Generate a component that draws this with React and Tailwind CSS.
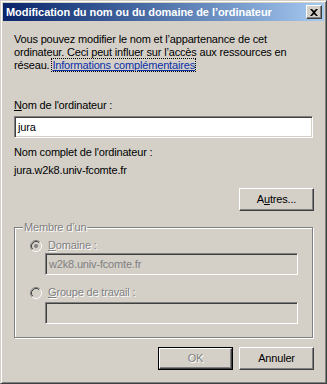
import React from 'react';

const raised =
  "border border-t-white border-l-white border-r-[#404040] border-b-[#404040] shadow-[inset_-1px_-1px_0_#808080] bg-[#d4d0c8]";
const sunken =
  "border border-t-[#808080] border-l-[#808080] border-r-white border-b-white shadow-[inset_1px_1px_0_#404040,inset_-1px_-1px_0_#d4d0c8]";
const disabledText = "text-[#808080] [text-shadow:1px_1px_0_#fff]";

function Radio({ checked }) {
  return (
    <svg width="12" height="12" viewBox="0 0 12 12" className="shrink-0">
      <circle cx="6" cy="6" r="5" fill="#d4d0c8" />
      <path d="M2.11 9.89 A5.5 5.5 0 0 1 9.89 2.11" fill="none" stroke="#808080" />
      <path d="M9.89 2.11 A5.5 5.5 0 0 1 2.11 9.89" fill="none" stroke="#fff" />
      <path d="M2.82 9.18 A4.5 4.5 0 0 1 9.18 2.82" fill="none" stroke="#404040" />
      <path d="M9.18 2.82 A4.5 4.5 0 0 1 2.82 9.18" fill="none" stroke="#d4d0c8" />
      {checked && <circle cx="6" cy="6" r="2" fill="#808080" />}
    </svg>
  );
}

function Button({ children, className = "" }) {
  return (
    <div className={`w-[75px] h-[23px] flex items-center justify-center ${raised} ${className}`}>
      {children}
    </div>
  );
}

export default function App() {
  return (
    <div className="w-[327px] h-[384px] bg-[#d4d0c8] border border-t-[#d4d0c8] border-l-[#d4d0c8] border-r-[#404040] border-b-[#404040] shadow-[inset_1px_1px_0_#fff,inset_-1px_-1px_0_#808080] p-[2px] flex flex-col font-['Liberation_Sans',Arial,sans-serif] text-[11px] leading-[13px] text-black">
      {/* title bar */}
      <div className="h-[18px] flex items-center justify-between bg-linear-to-r from-[#0a246a] to-[#a6caf0] pl-[3px] pr-[2px]">
        <span className="text-white font-bold whitespace-nowrap tracking-[-0.05px]">
          Modification du nom ou du domaine de l’ordinateur
        </span>
        <div className={`w-[16px] h-[14px] flex items-center justify-center ${raised}`}>
          <svg width="8" height="7" viewBox="0 0 8 7">
            <path d="M0 0h2l2 2 2-2h2L5 3.5 8 7H6L4 5 2 7H0l3-3.5z" fill="#000" />
          </svg>
        </div>
      </div>

      <div className="flex flex-col px-[11px] tracking-[-0.17px]">
        <p className="mt-[12px] whitespace-nowrap">
          Vous pouvez modifier le nom et l’appartenance de cet
          <br />
          ordinateur. Ceci peut influer sur l’accès aux ressources en
          <br />
          réseau.{' '}
          <span className="text-[#0a2fa8] underline outline-1 outline-dotted outline-black">
            Informations complémentaires
          </span>
        </p>

        <div className="mt-[27px]">
          <span className="underline">N</span>om de l'ordinateur :
        </div>
        <div className={`mt-[4px] h-[22px] bg-white flex items-center pl-[3px] ${sunken}`}>
          jura
        </div>

        <div className="mt-[8px]">Nom complet de l'ordinateur :</div>
        <div className="mt-[5px]">jura.w2k8.univ-fcomte.fr</div>

        <Button className="mt-[11px] self-end -mr-[1px]">
          A<span className="underline">u</span>tres...
        </Button>

        <fieldset className="mt-[10px] h-[117px] border border-[#808080] shadow-[inset_1px_1px_0_#fff,1px_1px_0_#fff] flex flex-col">
          <legend className={`ml-[8px] px-[1px] bg-[#d4d0c8] ${disabledText}`}>Membre d’un</legend>
          <div className="mt-[5px] ml-[15px] flex items-center gap-[6px]">
            <Radio checked />
            <span className={disabledText}>
              <span className="underline">D</span>omaine :
            </span>
          </div>
          <div className={`mt-[1px] ml-[30px] mr-[14px] h-[22px] flex items-center pl-[3px] bg-[#d4d0c8] ${sunken} text-[#808080]`}>
            w2k8.univ-fcomte.fr
          </div>
          <div className="mt-[11px] ml-[15px] flex items-center gap-[6px]">
            <Radio />
            <span className={disabledText}>
              <span className="underline">G</span>roupe de travail :
            </span>
          </div>
          <div className={`mt-[3px] ml-[30px] mr-[14px] h-[22px] bg-[#d4d0c8] ${sunken}`} />
        </fieldset>

        <div className="mt-[9px] flex justify-end gap-[6px] -mr-[1px]">
          <div className="w-[75px] h-[23px] border border-black flex">
            <div className={`flex-1 flex items-center justify-center ${raised} ${disabledText}`}>OK</div>
          </div>
          <Button>Annuler</Button>
        </div>
      </div>
    </div>
  );
}
